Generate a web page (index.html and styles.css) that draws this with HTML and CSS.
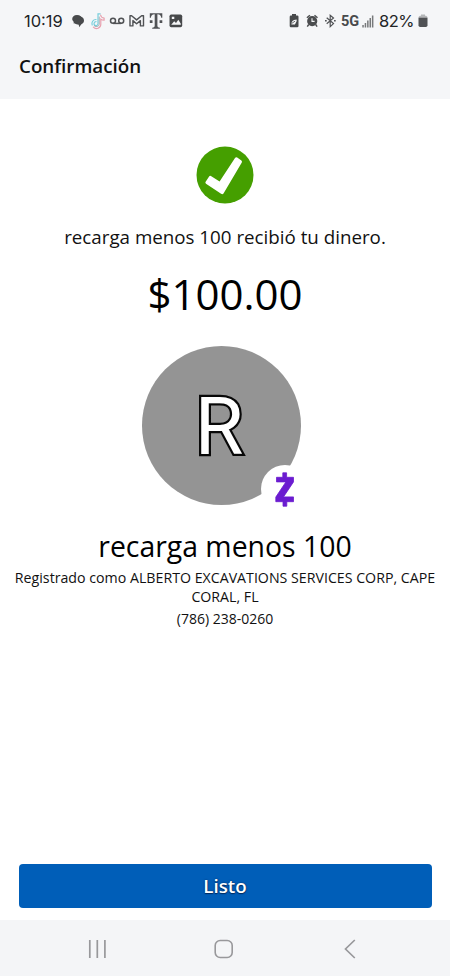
FILE: index.html
```html
<!DOCTYPE html>
<html lang="es">
<head>
<meta charset="utf-8">
<title>Confirmación</title>
<link rel="stylesheet" href="styles.css">
</head>
<body>
<div class="screen">
  <header class="top">
    <div class="status">
      <div class="status-left">
        <span class="clock">10:19</span>
        <svg class="icons-left" width="116" height="18" viewBox="70 12 116 18">
          <path fill="#484a4c" d="M77 15c3.300 0 4.900 1.800 4.900 4 0 2.600-1.800 4.300-4.900 4.300l-.7 0-3 0 .9-1.500c-1.400-.8-2-1.700-2-2.800 0-2.200 1.800-4 4.800-4z"/>
          <path fill="#484a4c" d="M78.500 16.300c3.600 0 5.500 1.800 5.500 4.200 0 1.700-.9 3-2.600 3.700l-2.300 3-.3-2.500c-3.400-.1-5.400-1.700-5.400-4.200 0-2.400 1.900-4.200 5.100-4.200z"/>
          <g fill="none" stroke-width="1.200" stroke-linecap="round">
            <path stroke="#e8a0ae" d="M100.600 15c.4 2 1.700 3 3.500 3.200v2c-1.300 0-2.500-.4-3.300-1v5a4.300 4.300 0 0 1-7.400 3"/>
            <path stroke="#79cfdc" d="M98 23.800v-10h2.200M98 23.800a2 2 0 1 1-2-2.200M96 19.500a4 4 0 0 0-3.800 5.500"/>
            <path stroke="#85868e" stroke-width=".6" d="M99.300 17v7a3 3 0 0 1-4.900 2"/>
          </g>
          <g fill="none" stroke="#505255" stroke-width="1.500"><circle cx="113" cy="20.800" r="2.500"/><circle cx="121.200" cy="20.800" r="2.500"/><path d="M113 23.400h8.200"/></g>
          <path fill="none" stroke="#505255" stroke-width="1.400" stroke-linejoin="round" d="M130 25.900V15.700h1.600l5 4.200 5-4.200h1.900v10.200h-3.100v-5.300l-3.800 3.200-3.700-3.200v5.300z"/>
          <path fill="#505255" d="M149.800 13.200h12.500v4.500h-1.100c-.3-2.200-1-3.300-3.800-3.400v11.200c0 1.500.6 2.100 2.500 2.200v1h-7.700v-1c1.900-.1 2.500-.7 2.500-2.200V14.300c-2.800.1-3.500 1.200-3.800 3.400h-1.100zM149.800 20.300h2.700v2.700h-2.700zM159.600 20.300h2.700v2.700h-2.700z"/>
          <rect x="169.500" y="14.500" width="12.700" height="12.700" rx="1.700" fill="#47494b"/>
          <path fill="#f5f6f8" d="M171.200 24.800l3-3.500 1.800 1.700 2.300-3.300 2.500 4v1.100zM171.800 16.800h2.500v2.200h-2.500z"/>
        </svg>
      </div>
      <div class="status-right">
        <svg width="50" height="18" viewBox="287 12 50 18">
          <path fill="#47494b" d="M292 14h4v1.500h1.300q1.200 0 1.200 1.200v9.200q0 1.300-1.300 1.300h-6.300q-1.200 0-1.200-1.300v-9.200q0-1.200 1.200-1.200H292z"/>
          <path fill="#f5f6f8" d="M291.400 24.600c0-3 1.200-5 5.200-5.200v1.800l-1.700 3.400z"/><path stroke="#47494b" stroke-width=".8" d="M291.600 23.500l3.500-2.400"/>
          <circle cx="312.200" cy="21.100" r="5.100" fill="#4b4d4f"/>
          <path fill="none" stroke="#4b4d4f" stroke-width="1.400" d="M306.900 17.800l3-2.600M317.500 17.800l-3-2.600M308.700 24.500l-1.400 2.100M315.700 24.500l1.400 2.100"/>
          <path fill="none" stroke="#f5f6f8" stroke-width="1.100" d="M312 18.200v3.200h2.600"/>
          <path fill="none" stroke="#505255" stroke-width="1.200" d="M326.700 17.700l6.800 5.900-3.300 3V15.200l3.300 2.800-6.800 5.700"/>
          <path fill="#505255" d="M325 19.900h1.700v1.700H325zM334 19.900h1.700v1.700H334z"/>
        </svg>
        <span class="net">5G</span>
        <svg class="signal" width="12" height="13" viewBox="0 0 12 13"><path fill="#77797b" d="M.3 10h1.500v2.500H.3zM2.700 8h1.500v4.500H2.700zM5.100 5.500h1.500v7H5.100zM7.500 3H9v9.500H7.500zM9.900.5h1.500v12H9.900z"/></svg>
        <span class="pct">82%</span>
        <svg class="battery" width="10" height="14" viewBox="0 0 10 14"><path fill="#b4b6b8" d="M3 .5h4v1.200h1Q9.500 2 9.500 4H.5Q.5 2 2 1.700h1z"/><path fill="#505255" d="M.5 3.700h9v7.600q0 1.700-1.700 1.700H2.200Q.5 13 .5 11.300z"/></svg>
      </div>
    </div>
    <h1 class="title">Confirmación</h1>
  </header>
  <main class="content">
    <svg class="check" width="58" height="58" viewBox="0 0 58 58"><circle cx="29" cy="29" r="28.500" fill="#459f00"/><path fill="#fff" d="M9.500 36.100l3.600-5.700q.8-.9 1.800-.3l8.700 5.500 15.400-23.700q1-1.200 2.200-.5l4.200 3q1 .8.400 2L27.500 47.500q-1 1.300-2.400.3L10 37.700q-1-.7-.5-1.600z"/></svg>
    <p class="message">recarga menos 100 recibió tu dinero.</p>
    <p class="amount">$100.00</p>
    <div class="avatar">
      <span class="initial">R</span>
      <span class="badge"><svg width="20" height="35" viewBox="0 0 20 35"><path fill="#6b1cd0" stroke="#6b1cd0" stroke-width=".8" stroke-linejoin="round" d="M7.800.8h3.800v4.500h6.900v4.600L8.500 24.900h10v4.800h-6.700v4.500H8v-4.500H.8v-4.600L10.900 9.900H1.500V5.300h6.300z"/></svg></span>
    </div>
    <h2 class="name">recarga menos 100</h2>
    <p class="registered">Registrado como ALBERTO EXCAVATIONS SERVICES CORP, CAPE CORAL, FL</p>
    <p class="phone">(786) 238-0260</p>
    <button class="done">Listo</button>
  </main>
  <nav class="nav">
    <svg width="20" height="20" viewBox="0 0 20 20"><path fill="none" stroke="#98989b" stroke-width="1.700" d="M2.800 1v18M10.300 1v18M17.900 1v18"/></svg>
    <svg width="20" height="20" viewBox="0 0 20 20"><rect x="1.200" y="1.500" width="17" height="17" rx="5" fill="none" stroke="#98989b" stroke-width="1.600"/></svg>
    <svg width="20" height="20" viewBox="0 0 20 20"><path fill="none" stroke="#98989b" stroke-width="1.700" d="M14.800 1L5.500 10l9.300 9"/></svg>
  </nav>
</div>
</body>
</html>
```
FILE: styles.css
```css
* { box-sizing: border-box; margin: 0; padding: 0; }
body { background: #fff; font-family: "Open Sans", sans-serif; color: #111; }
svg { display: block; flex: none; }
.screen { width: 450px; height: 976px; display: flex; flex-direction: column; overflow: hidden; }
.top { height: 99px; background: #f5f6f8; flex: none; }
.status { height: 42px; display: flex; justify-content: space-between; padding: 0 22px 0 24px; font-family: Inter, sans-serif; color: #222426; }
.status-left, .status-right { display: flex; align-items: center; }
.clock { font-size: 16.500px; letter-spacing: 0; width: 46px; white-space: nowrap; }
.net { font: 700 14.500px/18px Roboto, sans-serif; color: #484a4c; margin: 1px 0 0 4px; width: 20px; }
.signal { margin-left: 1px; }
.pct { font-size: 16.500px; letter-spacing: -0.5px; margin-left: 5px; width: 39px; white-space: nowrap; }
.battery { margin-bottom: 1px; }
.title { font-size: 18.800px; line-height: 26px; font-weight: 600; margin: 11px 0 0 19px; }
.content { flex: 1; display: flex; flex-direction: column; align-items: center; padding: 47px 0 12px; text-align: center; }
.message { font-size: 18.750px; line-height: 26px; margin-top: 20px; white-space: nowrap; }
.amount { font-size: 42px; line-height: 58px; margin-top: 15px; color: #000; }
.avatar { position: relative; width: 159px; height: 159px; border-radius: 50%; background: #949494; margin: 23px 8px 0 0; display: flex; align-items: center; justify-content: center; }
.initial { font: 400 79px/80px Roboto, sans-serif; color: #fff; -webkit-text-stroke: 4.500px #080808; paint-order: stroke fill; stroke-linejoin: round; margin: 3px 4px 0 0; }
.badge { position: absolute; left: 119px; top: 119px; width: 48px; height: 48px; border-radius: 50%; background: #fff; display: flex; align-items: center; justify-content: center; }
.name { font-size: 28.400px; line-height: 40px; font-weight: 400; margin-top: 21px; color: #000; white-space: nowrap; }
.registered { font-size: 14.200px; line-height: 19px; width: 430px; margin-top: 2px; }
.phone { font-size: 14px; line-height: 19px; margin-top: 3px; }
.done { width: 413px; height: 44px; margin-top: auto; border: 0; border-radius: 4px; background: #005eb8; color: #fff; font: 600 18.700px/26px "Open Sans", sans-serif; text-shadow: 0 0 2px #002b60, 0 1px 1px #002b60; }
.nav { height: 56px; flex: none; background: #f4f5f7; display: flex; align-items: center; justify-content: space-between; padding: 2px 90px 0 87px; }
```
